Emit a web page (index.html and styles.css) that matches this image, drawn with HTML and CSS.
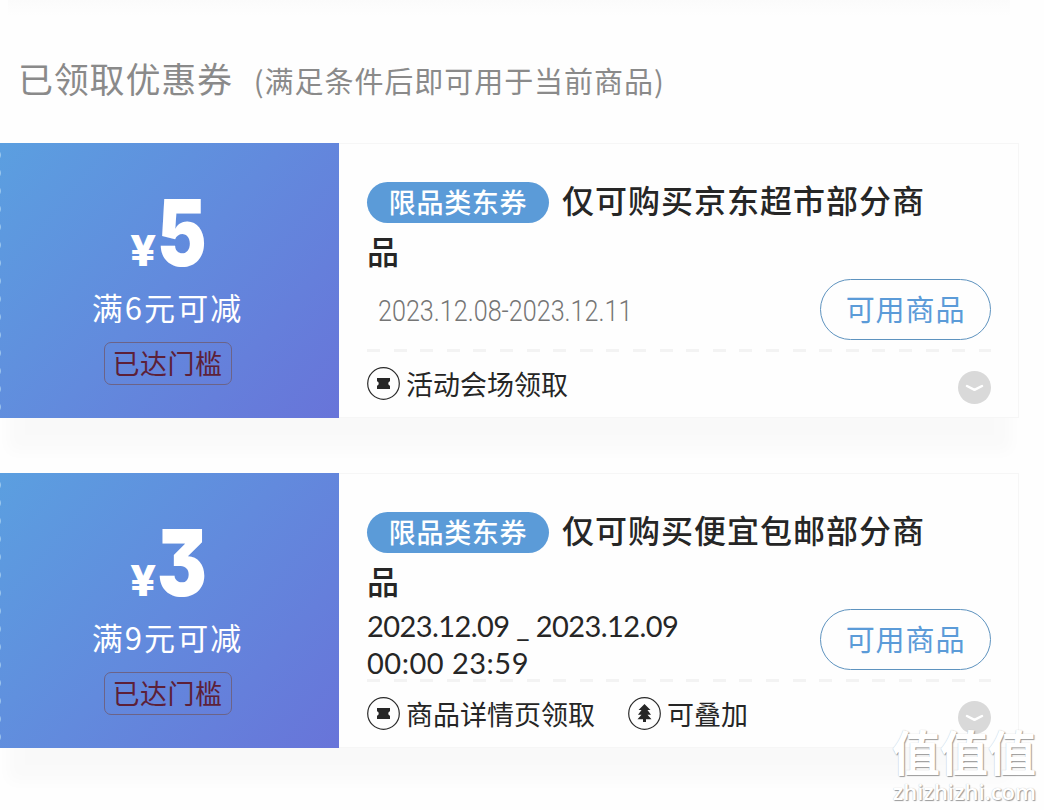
FILE: index.html
```html
<!DOCTYPE html>
<html lang="zh-CN">
<head>
    <meta charset="UTF-8">
    <meta name="viewport" content="width=device-width, initial-scale=1.0">
    <title>优惠券</title>
    <link rel="stylesheet" href="styles.css">
</head>
<body>
<div class="page">
    <div class="top-shadow"></div>
    <h2 class="heading">已领取优惠券<span class="heading-note">(满足条件后即可用于当前商品)</span></h2>

    <div class="coupon">
        <div class="coupon-left">
            <div class="amount"><span class="yen">¥</span><span class="number">5</span></div>
            <div class="condition">满6元可减</div>
            <div class="reached">已达门槛</div>
        </div>
        <div class="coupon-info">
            <div class="title"><span class="tag">限品类东券</span>仅可购买京东超市部分商品</div>
            <div class="middle">
                <div class="date-short"><span>2023.12.08-2023.12.11</span></div>
                <button class="use-btn">可用商品</button>
            </div>
            <div class="divider"></div>
            <div class="footer">
                <div class="source">
                    <svg class="icon" viewBox="0 0 33 33">
                        <circle cx="16.5" cy="16.5" r="15.8" fill="none" stroke="#2b2b2b" stroke-width="1.2"/>
                        <path d="M10 11h13v3.200a2.400 2.400 0 0 0 0 4.600V22H10v-3.200a2.400 2.400 0 0 0 0-4.600z" fill="#262626"/>
                    </svg>
                    <span>活动会场领取</span>
                </div>
                <svg class="arrow" viewBox="0 0 33 33">
                    <circle cx="16.5" cy="16.5" r="16.5" fill="#d9d9d9"/>
                    <path d="M9 15l7.5 3.8L24 15" fill="none" stroke="#fff" stroke-width="2.5" stroke-linecap="round" stroke-linejoin="round"/>
                </svg>
            </div>
        </div>
    </div>

    <div class="coupon">
        <div class="coupon-left">
            <div class="amount"><span class="yen">¥</span><span class="number">3</span></div>
            <div class="condition">满9元可减</div>
            <div class="reached">已达门槛</div>
        </div>
        <div class="coupon-info">
            <div class="title"><span class="tag">限品类东券</span>仅可购买便宜包邮部分商品</div>
            <div class="middle">
                <div class="date-long">
                    <div class="day">2023.12.09 _ 2023.12.09</div>
                    <div class="time">00:00 23:59</div>
                </div>
                <button class="use-btn">可用商品</button>
            </div>
            <div class="divider"></div>
            <div class="footer">
                <div class="source">
                    <svg class="icon" viewBox="0 0 33 33">
                        <circle cx="16.5" cy="16.5" r="15.8" fill="none" stroke="#2b2b2b" stroke-width="1.2"/>
                        <path d="M10 11h13v3.200a2.400 2.400 0 0 0 0 4.600V22H10v-3.200a2.400 2.400 0 0 0 0-4.600z" fill="#262626"/>
                    </svg>
                    <span>商品详情页领取</span>
                </div>
                <div class="source">
                    <svg class="icon" viewBox="0 0 33 33">
                        <circle cx="16.5" cy="16.5" r="15.8" fill="none" stroke="#2b2b2b" stroke-width="1.2"/>
                        <path d="M16.500 7L22.500 13H19.500L23 17.700H19.500L23.500 22.200H18V25H15V22.200H9.500L13.500 17.700H10L13.500 13H10.500z" fill="#262626"/>
                    </svg>
                    <span>可叠加</span>
                </div>
                <svg class="arrow" viewBox="0 0 33 33">
                    <circle cx="16.5" cy="16.5" r="16.5" fill="#d9d9d9"/>
                    <path d="M9 15l7.5 3.8L24 15" fill="none" stroke="#fff" stroke-width="2.5" stroke-linecap="round" stroke-linejoin="round"/>
                </svg>
            </div>
        </div>
    </div>

    <div class="watermark">
        <div class="watermark-name">值值值</div>
        <div class="watermark-site">zhizhizhi.com</div>
    </div>
</div>
</body>
</html>
```
FILE: styles.css
```css
* {
    margin: 0;
    padding: 0;
    box-sizing: border-box;
}

:root {
    --blue: #5b9bd8;
    --text-color: #262626;
    --gray: #8a8a8a;
}

body {
    height: 810px;
    overflow: hidden;
    background: #fefefe;
    color: var(--text-color);
    font-family: 'Noto Sans CJK SC', sans-serif;
}

.page {
    position: relative;
    height: 810px;
    overflow: hidden;
}

.top-shadow {
    height: 16px;
    margin: 0 34px 0 8px;
    background: linear-gradient(#fbfbfb, #fefefe);
}

.heading {
    height: 127px;
    padding-left: 18px;
    line-height: 124px;
    font-size: 35px;
    font-weight: 400;
    letter-spacing: 0.8px;
    color: var(--gray);
    white-space: nowrap;
}

.heading-note {
    margin-left: 21px;
    font-size: 29px;
    letter-spacing: 0.95px;
}

.coupon {
    display: flex;
    width: 1019px;
    height: 275px;
    margin-bottom: 55px;
    background: #fefefe;
    box-shadow: 0 42px 14px -8px rgba(0, 0, 0, 0.018);
}

/* 左侧金额，边缘有锯齿 */
.coupon-left {
    width: 339px;
    padding: 45px 4px 0 0;
    display: flex;
    flex-direction: column;
    align-items: center;
    background:
        radial-gradient(circle at -4px 9px, #b4d8f3 4px, transparent 5.5px) 0 3px / 4px 18px repeat-y,
        linear-gradient(130deg, #5b9fe0 0%, #628add 50%, #6874d9 100%);
    color: #fff;
}

.amount {
    display: flex;
    align-items: baseline;
    height: 98px;
    line-height: 90px;
    font-family: Inter, sans-serif;
    font-weight: 900;
}

.yen {
    width: 28px;
    font-size: 42px;
    font-weight: 800;
    transform: translateX(-1px) scaleX(1.08);
    transform-origin: left;
}

.number {
    width: 46px;
    font-size: 92px;
    font-feature-settings: 'cv09';
    transform: translateX(-2px) scaleX(0.81);
    transform-origin: left;
}

.condition {
    height: 45px;
    line-height: 42px;
    font-size: 31px;
    letter-spacing: 2.1px;
}

.reached {
    height: 43px;
    margin-top: 11px;
    padding: 0 8px;
    line-height: 40px;
    border: 1px solid #6c6387;
    border-radius: 7px;
    font-size: 27px;
    letter-spacing: 0.5px;
    color: #5d2038;
}

.coupon-info {
    flex: 1;
    padding: 30px 27px 0 28px;
    border: 1px solid #f6f6f6;
    border-left: none;
}

.title {
    height: 105px;
    line-height: 51px;
    width: 570px;
    font-size: 32px;
    font-weight: 500;
    letter-spacing: 1px;
}

.tag {
    display: inline-block;
    width: 182px;
    height: 41px;
    margin-right: 13px;
    line-height: 39px;
    border-radius: 21px;
    background: var(--blue);
    color: #fff;
    font-size: 27px;
    letter-spacing: 0.7px;
    text-align: center;
    vertical-align: 0;
}

.middle {
    display: flex;
    justify-content: space-between;
    align-items: flex-start;
    height: 70px;
}

.date-short {
    width: 270px;
    padding-left: 11px;
    line-height: 64px;
    font-family: Roboto, sans-serif;
    font-size: 30px;
    font-weight: 300;
    color: #757575;
    white-space: nowrap;
}

.date-short span {
    display: inline-block;
    transform: scaleX(0.838);
    transform-origin: left;
}

.date-long {
    margin-top: -2px;
    line-height: 37px;
    font-family: Lato, sans-serif;
    font-size: 29px;
    white-space: nowrap;
}

.day {
    letter-spacing: -0.58px;
}

.time {
    letter-spacing: 0.5px;
}

.use-btn {
    width: 171px;
    height: 61px;
    padding-bottom: 3px;
    border: 1px solid #5e93bf;
    border-radius: 31px;
    background: transparent;
    color: var(--blue);
    font-family: inherit;
    font-size: 29px;
    letter-spacing: 0.9px;
}

.divider {
    height: 3px;
    background: repeating-linear-gradient(90deg, #f3f3f3 0 13px, transparent 13px 26.6px);
}

.footer {
    display: flex;
    align-items: center;
    gap: 33px;
    height: 63px;
}

.source {
    display: flex;
    align-items: center;
    gap: 6px;
    font-size: 27px;
    line-height: 40px;
}

.source span {
    padding-top: 1px;
}

.icon {
    width: 33px;
    height: 33px;
}

.arrow {
    width: 33px;
    height: 33px;
    margin: 8px 0 0 auto;
}

.watermark {
    position: absolute;
    right: 8px;
    bottom: 2px;
    text-align: right;
    color: #fff;
    text-shadow: 1px 1px 1px #999, 0 0 1px #bbb;
}

.watermark-name {
    font-size: 48px;
    font-weight: 700;
    line-height: 50px;
}

.watermark-site {
    font-family: 'Open Sans', sans-serif;
    font-size: 22px;
    font-weight: 600;
    line-height: 33px;
}
```
